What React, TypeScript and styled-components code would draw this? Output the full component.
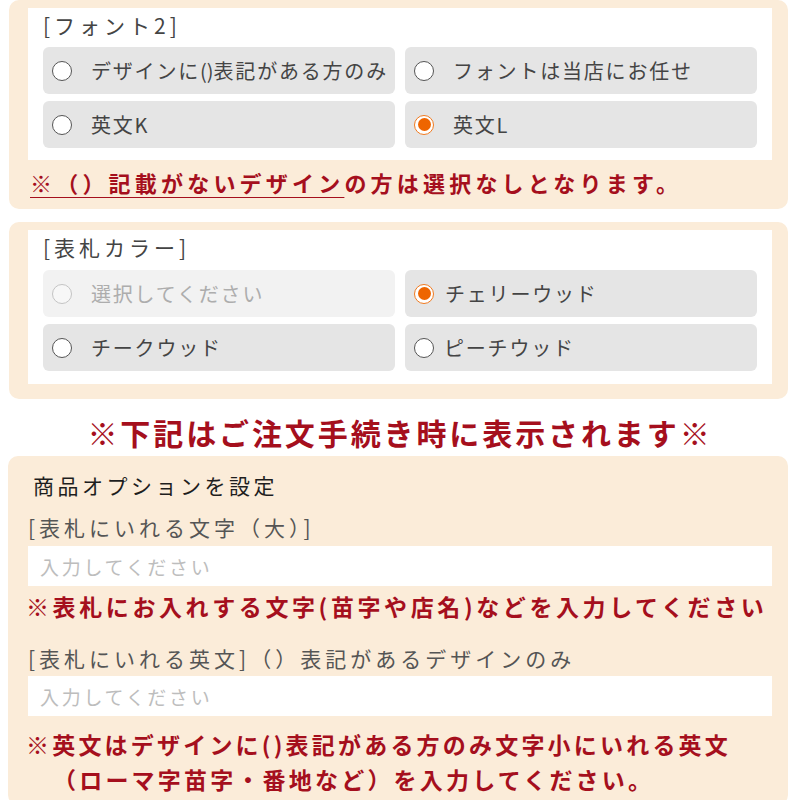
import styled, { createGlobalStyle } from 'styled-components';

const GlobalStyle = createGlobalStyle`
    body {
        margin: 0;
        background: #ffffff;
        font-family: "Noto Sans CJK JP", "Noto Sans", sans-serif;
    }
`;

const Page = styled.div`
    width: 800px;
    padding-bottom: 20px;
`;

const Panel = styled.section<{ $top?: number; $bottom?: number }>`
    background: #fbecd9;
    border-radius: 10px;
    margin: ${p => p.$top ?? 0}px 12px 0 9px;
    padding: 8px 16px ${p => p.$bottom ?? 14}px 19px;
`;

const WhiteBox = styled.div<{ $bottom?: number }>`
    background: #ffffff;
    padding: 0 15px ${p => p.$bottom ?? 12}px 15px;
`;

const GroupTitle = styled.div<{ $gap?: number }>`
    font-size: 21px;
    line-height: 34px;
    letter-spacing: 4px;
    color: #444;
    margin-bottom: ${p => p.$gap ?? 5}px;
`;

const ChoiceGrid = styled.div`
    display: grid;
    grid-template-columns: 1fr 1fr;
    column-gap: 10px;
    row-gap: 7px;
`;

const Choice = styled.label<{ $disabled?: boolean; $gap?: number }>`
    display: flex;
    align-items: center;
    gap: ${p => p.$gap ?? 19}px;
    height: 47px;
    padding-left: 9px;
    border-radius: 6px;
    background: ${p => (p.$disabled ? '#f2f2f2' : '#e5e5e5')};
    color: ${p => (p.$disabled ? '#adadad' : '#444')};
    font-size: 20px;
    letter-spacing: 1.8px;
    white-space: nowrap;
`;

const Paren = styled.span`
    letter-spacing: 0;
`;

const Radio = styled.span<{ $checked?: boolean; $disabled?: boolean }>`
    flex: none;
    width: 20px;
    height: 20px;
    box-sizing: border-box;
    border-radius: 50%;
    border: 1px solid ${p => (p.$checked ? '#f07a20' : p.$disabled ? '#c4c4c4' : '#555')};
    background: ${p => (p.$disabled ? '#f7f7f7' : '#fff')};
    display: flex;
    align-items: center;
    justify-content: center;

    &::after {
        content: '';
        display: ${p => (p.$checked ? 'block' : 'none')};
        width: 13px;
        height: 13px;
        border-radius: 50%;
        background: #ee6500;
    }
`;

const PanelNote = styled.p`
    margin: 9px 0 0 2px;
    font-size: 22px;
    line-height: 26px;
    font-weight: 700;
    letter-spacing: 4.2px;
    color: #a50f1d;
    white-space: nowrap;
`;

const Underlined = styled.span`
    text-decoration: underline;
    text-decoration-thickness: 1px;
    text-underline-offset: 5px;
`;

const Notice = styled.h2`
    margin: 16px 0 7px;
    text-align: center;
    font-size: 30px;
    line-height: 34px;
    font-weight: 700;
    letter-spacing: 2.9px;
    color: #a50f1d;
`;

const FormPanel = styled.section`
    background: #fbecd9;
    border-radius: 10px;
    margin: 0 12px 0 8px;
    padding: 16px 16px 8px 20px;
`;

const FormTitle = styled.h3`
    margin: 0 0 0 5px;
    font-size: 21px;
    line-height: 26px;
    font-weight: 400;
    letter-spacing: 3.5px;
    color: #1e1e1e;
`;

const FieldLabel = styled.div<{ $top: number }>`
    margin-top: ${p => p.$top}px;
    font-size: 21px;
    line-height: 30px;
    letter-spacing: 4px;
    color: #555;
    white-space: nowrap;
`;

const TextInput = styled.input<{ $top: number }>`
    display: block;
    box-sizing: border-box;
    width: 744px;
    height: 40px;
    margin-top: ${p => p.$top}px;
    border: none;
    outline: none;
    background: #fff;
    padding: 0 12px;
    font-family: "Noto Sans CJK JP", "Noto Sans", sans-serif;
    font-size: 19px;
    letter-spacing: 2.7px;
    color: #333;

    &::placeholder {
        color: #bdbdbd;
    }
`;

const FieldNote = styled.p<{ $top: number; $lh: number; $spacing?: number }>`
    margin: ${p => p.$top}px 0 0 -2px;
    font-size: 23px;
    line-height: ${p => p.$lh}px;
    font-weight: 700;
    letter-spacing: ${p => p.$spacing ?? 3.6}px;
    color: #a50f1d;
    white-space: nowrap;
`;

const Hanging = styled.span`
    display: block;
    padding-left: 27px;
    text-indent: -27px;
`;

type Opt = { label: React.ReactNode; key: string; checked?: boolean; disabled?: boolean; gap?: number };

function ChoiceGroup({ title, options, titleGap, bottom }: Readonly<{ title: string; options: Opt[]; titleGap?: number; bottom?: number }>) {
    return (
        <WhiteBox $bottom={bottom}>
            <GroupTitle $gap={titleGap}>{title}</GroupTitle>
            <ChoiceGrid>
                {options.map(o => (
                    <Choice key={o.key} $disabled={o.disabled} $gap={o.gap}>
                        <Radio $checked={o.checked} $disabled={o.disabled} />
                        <span>{o.label}</span>
                    </Choice>
                ))}
            </ChoiceGrid>
        </WhiteBox>
    );
}

export default function App() {
    return (
        <Page>
            <GlobalStyle />
            <Panel>
                <ChoiceGroup
                    title="[フォント2]"
                    options={[
                        { key: 'a', label: <>デザインに<Paren>()</Paren>表記がある方のみ</> },
                        { key: 'b', label: 'フォントは当店にお任せ' },
                        { key: 'c', label: '英文K' },
                        { key: 'd', label: '英文L', checked: true },
                    ]}
                />
                <PanelNote>
                    <Underlined>※（）記載がないデザイン</Underlined>の方は選択なしとなります。
                </PanelNote>
            </Panel>

            <Panel $top={13} $bottom={15}>
                <ChoiceGroup
                    title="[表札カラー]"
                    titleGap={6}
                    bottom={13}
                    options={[
                        { key: 'a', label: '選択してください', disabled: true },
                        { key: 'b', label: 'チェリーウッド', checked: true, gap: 11 },
                        { key: 'c', label: 'チークウッド' },
                        { key: 'd', label: 'ピーチウッド', gap: 10 },
                    ]}
                />
            </Panel>

            <Notice>※下記はご注文手続き時に表示されます※</Notice>

            <FormPanel>
                <FormTitle>商品オプションを設定</FormTitle>
                <FieldLabel $top={14}>[表札にいれる文字（大）]</FieldLabel>
                <TextInput $top={4} placeholder="入力してください" />
                <FieldNote $top={6} $lh={28}>
                    ※表札にお入れする文字(苗字や店名)などを入力してください
                </FieldNote>
                <FieldLabel $top={23}>[表札にいれる英文]（）表記があるデザインのみ</FieldLabel>
                <TextInput $top={3} placeholder="入力してください" />
                <FieldNote $top={11} $lh={35} $spacing={3.2}>
                    <Hanging>
                        ※英文はデザインに()表記がある方のみ文字小にいれる英文
                        <br />
                        （ローマ字苗字・番地など）を入力してください。
                    </Hanging>
                </FieldNote>
            </FormPanel>
        </Page>
    );
}
